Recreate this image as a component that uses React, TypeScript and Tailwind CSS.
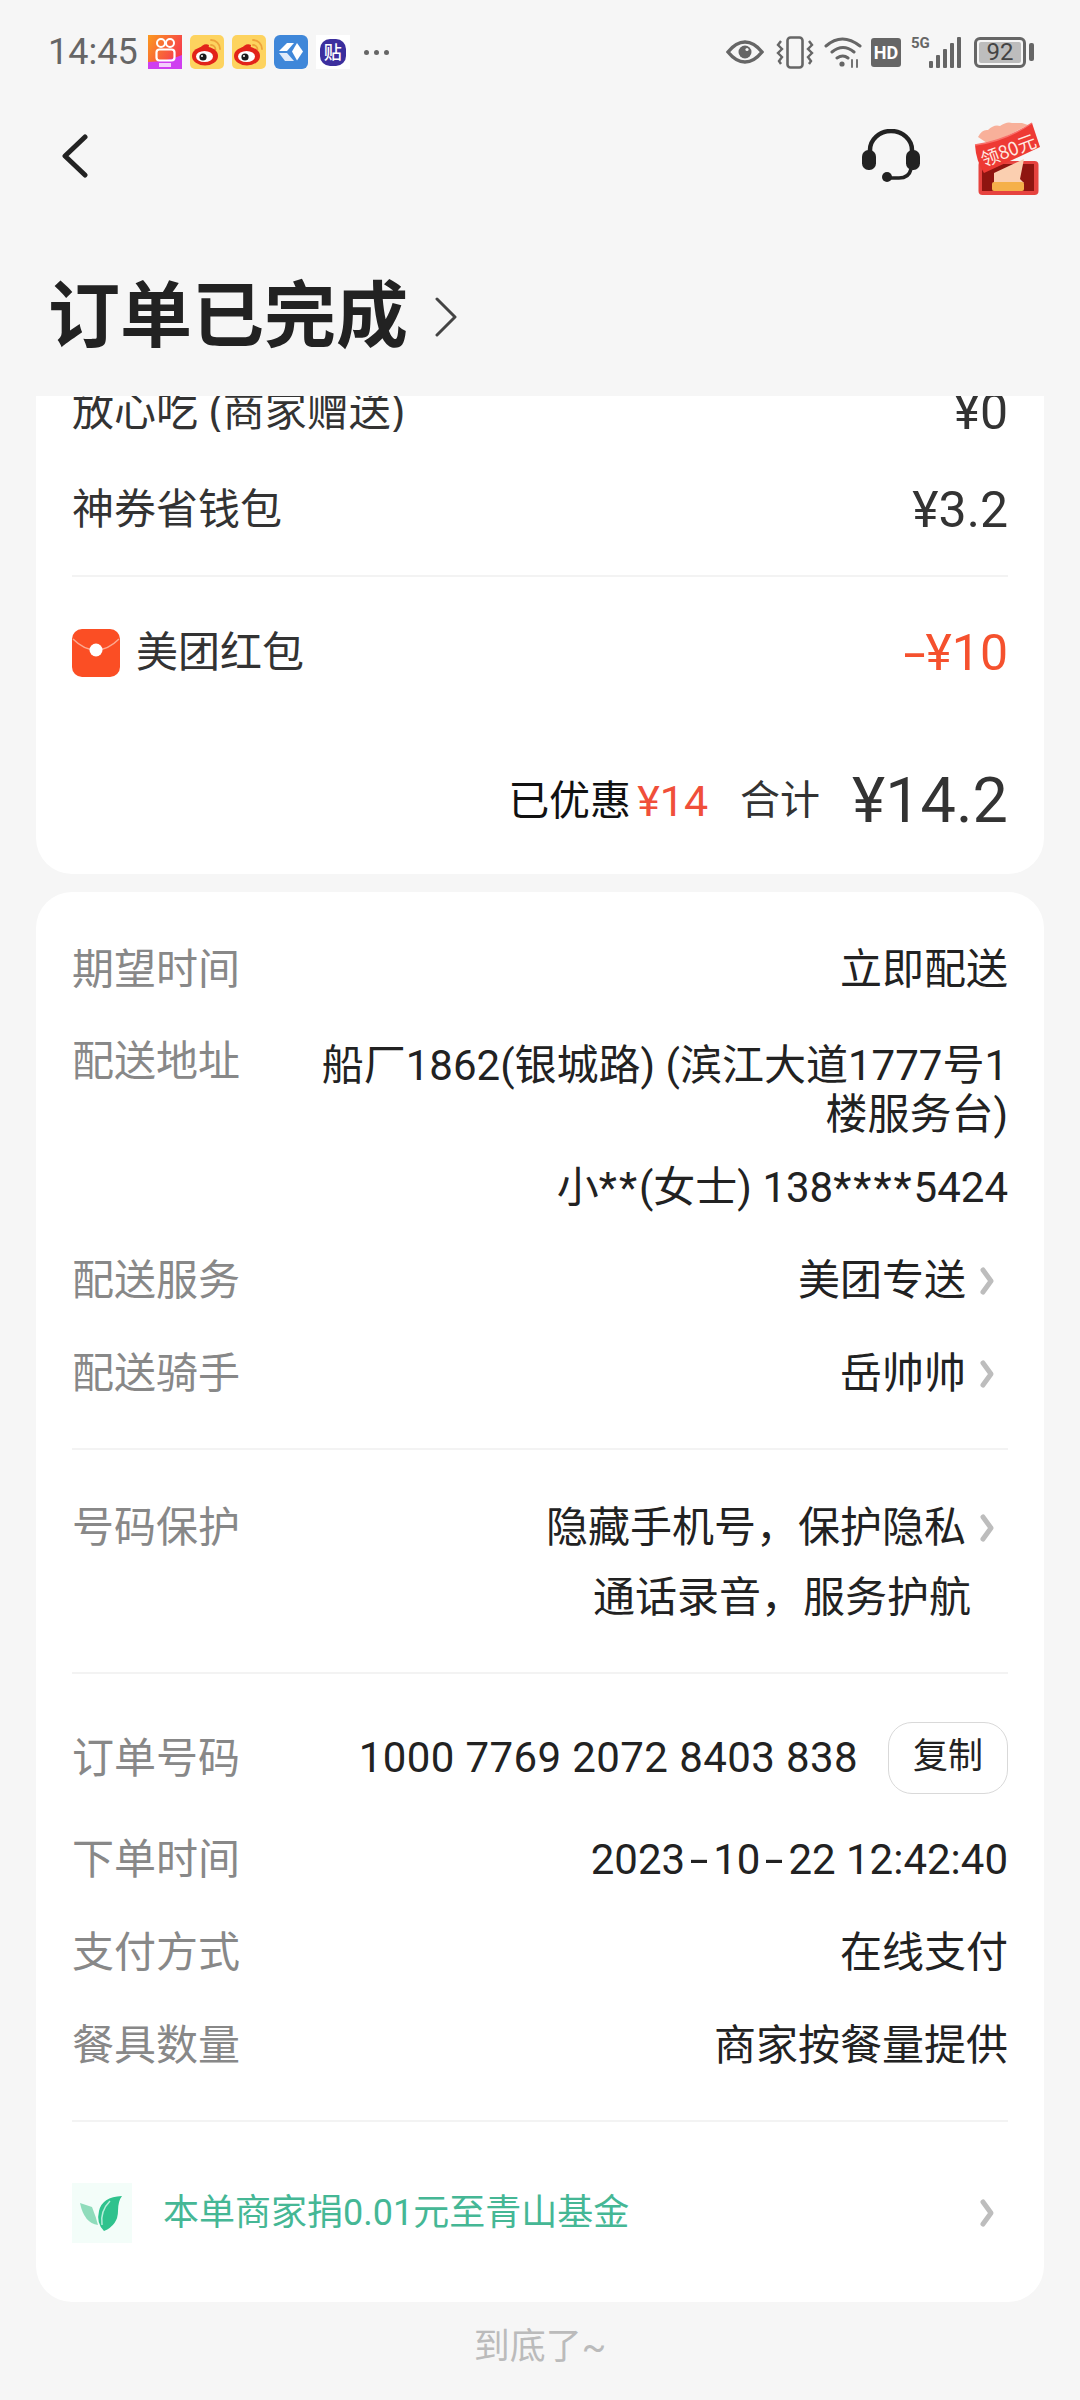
import React from 'react';

const Chevron = ({ className = '' }: { className?: string }) => (
  <svg viewBox="0 0 18 30" className={className} fill="none" stroke="currentColor" strokeWidth={5} strokeLinecap="round" strokeLinejoin="round">
    <path d="M5 4l8 11-8 11" />
  </svg>
);

// the hyphen in this UI font is much wider than Roboto's
const Dash = ({ width = 'w-[28px]' }: { width?: string }) => (
  <span className={`inline-block text-center scale-x-[1.6] ${width}`}>-</span>
);

const Kuaishou = () => (
  <svg viewBox="0 0 34 34" className="w-[34px] h-[34px]">
    <defs>
      <linearGradient id="ks" x1="0" y1="0" x2="1" y2="0.6">
        <stop offset="0" stopColor="#fb9a1f" />
        <stop offset="1" stopColor="#f6364f" />
      </linearGradient>
    </defs>
    <rect width="34" height="34" fill="url(#ks)" />
    <path d="M0 27q18 0 34-7v14H0z" fill="#cf3ff0" />
    <circle cx="13" cy="8" r="4" fill="none" stroke="#fff" strokeWidth="2" />
    <circle cx="22" cy="8" r="4" fill="none" stroke="#fff" strokeWidth="2" />
    <rect x="8.500" y="14.500" width="18" height="11" rx="3" fill="none" stroke="#fff" strokeWidth="2.200" />
    <rect x="11" y="28" width="12" height="4" fill="#fff" opacity="0.75" />
  </svg>
);

const Weibo = () => (
  <svg viewBox="0 0 34 34" className="w-[34px] h-[34px]">
    <rect width="34" height="34" rx="5" fill="#fdd35f" />
    <path d="M21 5a9 9 0 0 1 9 9M21 10a4.500 4.500 0 0 1 4.500 4.500" fill="none" stroke="#eda33a" strokeWidth="1.800" strokeLinecap="round" />
    <ellipse cx="15" cy="21" rx="13" ry="9.500" fill="#e2231a" />
    <path d="M8 15q6-8 11-5l-1 6z" fill="#e2231a" />
    <ellipse cx="14.500" cy="21.500" rx="8.500" ry="5.500" fill="#fff" />
    <circle cx="13" cy="22" r="3.600" fill="#1a1a1a" />
    <circle cx="12" cy="21" r="1" fill="#fff" />
  </svg>
);

const BlueApp = () => (
  <svg viewBox="0 0 34 34" className="w-[34px] h-[34px]">
    <rect width="34" height="34" rx="6" fill="#3f87d9" />
    <path d="M5 16l8-8h7l-7 8z" fill="#fff" />
    <path d="M5 18h8l7 8h-9z" fill="#dfeafa" />
    <path d="M23 8l6 8.500-6 9-5-9z" fill="#fff" />
  </svg>
);

const TieApp = () => (
  <div className="w-[34px] h-[34px] bg-white flex items-center justify-center">
    <div className="w-[26px] h-[27px] rounded-[10px] bg-[#3c2f9e] text-white text-[18px] leading-[27px] text-center font-medium">贴</div>
  </div>
);

const EyeIcon = () => (
  <svg viewBox="0 0 38 26" className="w-[38px] h-[26px]">
    <path d="M2 13Q10 3 19 3t17 10q-8 10-17 10T2 13z" fill="none" stroke="#666" strokeWidth="3.500" />
    <circle cx="19" cy="13" r="6.500" fill="#666" />
    <circle cx="21" cy="10.500" r="1.600" fill="#f6f6f6" />
  </svg>
);

const VibrateIcon = () => (
  <svg viewBox="0 0 38 33" className="w-[38px] h-[33px]" fill="none" stroke="#666" strokeWidth="2.400">
    <rect x="11.500" y="1.500" width="15" height="30" rx="3" strokeWidth="2.600" />
    <path d="M5 5L2 9l4 4-4 4 4 4-3 4 2 3M33 5l3 4-4 4 4 4-4 4 3 4-2 3" />
  </svg>
);

const WifiIcon = () => (
  <svg viewBox="0 0 38 32" className="w-[38px] h-[32px]" fill="none" stroke="#666" strokeWidth="3" strokeLinecap="round">
    <path d="M2 10q16-14 34 0M8 16q11-9 22 0M13 22q6-4 11 0" />
    <circle cx="18" cy="28" r="2.600" fill="#666" stroke="none" />
    <path d="M28 24v7M33 24v7" strokeWidth="1.800" />
  </svg>
);

const SignalIcon = () => (
  <svg viewBox="0 0 33 31" className="w-[33px] h-[31px]" fill="#666">
    <rect x="1" y="24" width="4" height="7" rx="1" />
    <rect x="8" y="18" width="4" height="13" rx="1" />
    <rect x="15" y="12" width="4" height="19" rx="1" />
    <rect x="22" y="6" width="4" height="25" rx="1" />
    <rect x="29" y="0" width="4" height="31" rx="1" />
  </svg>
);

const Headset = () => (
  <svg viewBox="0 0 60 54" className="w-[60px] h-[54px]">
    <path d="M9 24V21a21 19 0 0 1 42 0v3" fill="none" stroke="#222" strokeWidth="4.500" />
    <rect x="1" y="21" width="14" height="20" rx="6.500" fill="#222" />
    <rect x="45" y="21" width="14" height="20" rx="6.500" fill="#222" />
    <path d="M50 40q-2 9-12 9H26" fill="none" stroke="#222" strokeWidth="3.500" />
    <circle cx="26" cy="48" r="5" fill="#222" />
  </svg>
);

const PromoIcon = () => (
  <svg viewBox="12 5 70 80" className="w-[70px] h-[80px]">
    <rect x="18.500" y="50" width="60" height="34" rx="4" fill="#e6433f" />
    <rect x="22" y="53" width="52" height="27" fill="#8f1510" />
    <path d="M34 62l30-14-4 20 4 4H34z" fill="#fbcfb0" />
    <rect x="32" y="71" width="32" height="9" rx="2" fill="#f5b04a" />
    <path d="M18 26q4-8 10-7 6-6 12-4 7-5 12-3h10l6 2-38 20z" fill="#f8b09a" />
    <path d="M15 34q30-4 57-22l8 24-56 26q-8-12-9-28z" fill="#ee3a34" />
    <path d="M15 34q30-4 57-22" fill="none" stroke="#f9706a" strokeWidth="1.500" />
    <text x="24" y="56" transform="rotate(-21 24 56)" fontSize="18.500" fill="#ffe9e2" fontFamily="'Noto Sans CJK SC', sans-serif">领80元</text>
  </svg>
);

const RedPacket = () => (
  <svg viewBox="0 0 48 48" className="w-[48px] h-[48px] shrink-0">
    <rect width="48" height="48" rx="10" fill="#fb4e24" />
    <path d="M1 10q11 11 23 11t23-11" fill="none" stroke="#fda88f" strokeWidth="1.500" />
    <circle cx="24" cy="21" r="6.500" fill="#fff" />
  </svg>
);

const LeafIcon = () => (
  <div className="w-[60px] h-[60px] bg-[#f3fdf9] shrink-0">
    <svg viewBox="0 0 60 60" className="w-[60px] h-[60px]">
      <path d="M8 20q6 2 12 4 4 10 6 18Q12 40 8 20z" fill="#8fdcbb" />
      <path d="M50 13q-20 1-23 15-3 12 5 20 14-6 14-20 0-10 4-15z" fill="#2fc28d" />
      <path d="M38 18q-10 10-8 24" fill="none" stroke="#b7eeda" strokeWidth="1.500" />
    </svg>
  </div>
);

const Row = ({ label, children, className = '' }: { label: string; children: React.ReactNode; className?: string }) => (
  <div className={`flex justify-between items-start ${className}`}>
    <span className="text-[#888888] shrink-0">{label}</span>
    <div className="text-right">{children}</div>
  </div>
);

const Arrow = () => <Chevron className="w-[18px] h-[30px] text-[#bdbdbd] ml-[12px] mr-[12px] shrink-0" />;

export default function App() {
  return (
    <div className="w-[1080px] h-[2400px] bg-[#f6f6f6] overflow-hidden text-[42px] leading-[56px] text-[#222222]" style={{ fontFamily: 'Roboto, "Noto Sans CJK SC", sans-serif' }}>
      {/* status bar */}
      <div className="h-[104px] pl-[48px] pr-[46px] flex items-center justify-between">
        <div className="flex items-center">
          <span className="text-[36px] text-[#666666] leading-none mr-[10px]">14:45</span>
          <div className="flex items-center gap-[8px]">
            <Kuaishou />
            <Weibo />
            <Weibo />
            <BlueApp />
            <TieApp />
          </div>
          <div className="flex gap-[5px] ml-[14px]">
            <span className="w-[5px] h-[5px] rounded-full bg-[#666666]" />
            <span className="w-[5px] h-[5px] rounded-full bg-[#666666]" />
            <span className="w-[5px] h-[5px] rounded-full bg-[#666666]" />
          </div>
        </div>
        <div className="flex items-center">
          <EyeIcon />
          <div className="ml-[12px]"><VibrateIcon /></div>
          <div className="ml-[10px]"><WifiIcon /></div>
          <div className="ml-[9px] w-[30px] h-[29px] rounded-[3px] bg-[#666666] text-white text-[18px] font-bold leading-[29px] text-center">HD</div>
          <div className="ml-[10px] flex items-start relative">
            <span className="text-[#666666] text-[15px] font-bold leading-[15px] absolute -top-[1px] left-0">5G</span>
            <div className="ml-[17px]"><SignalIcon /></div>
          </div>
          <div className="ml-[13px] w-[52px] h-[31px] rounded-[6px] border-[3px] border-[#666666] p-[2px]">
            <div className="h-full w-full bg-[#bdbdbd] rounded-[2px] text-[#444444] text-[24px] leading-[21px] text-center">92</div>
          </div>
          <div className="ml-[3px] w-[5px] h-[18px] rounded-[2px] bg-[#666666]" />
        </div>
      </div>

      {/* nav */}
      <div className="h-[104px] pl-[62px] pr-[38px] flex items-center justify-between">
        <svg viewBox="0 0 26 44" className="w-[26px] h-[44px]" fill="none" stroke="#222" strokeWidth={5} strokeLinecap="round" strokeLinejoin="round">
          <path d="M23 3L3 22l20 19" />
        </svg>
        <div className="flex items-center gap-[51px]">
          <Headset />
          <PromoIcon />
        </div>
      </div>

      {/* title */}
      <div className="h-[188px] pl-[48px] pt-[39px] flex items-start">
        <div className="flex items-center h-[140px]">
          <h1 className="text-[72px] font-bold leading-none">订单已完成</h1>
          <svg viewBox="0 0 22 40" className="w-[22px] h-[40px] ml-[27px]" fill="none" stroke="#444" strokeWidth={3} strokeLinecap="round" strokeLinejoin="round">
            <path d="M2 2l18 18L2 38" />
          </svg>
        </div>
      </div>

      {/* price card, scrolled under the title */}
      <div className="mx-[36px] bg-white rounded-b-[36px] px-[36px] h-[478px]">
        <div className="h-[36px] overflow-hidden flex justify-between items-end">
          <span className="text-[#333333] leading-[56px] -mb-[8px]">放心吃 (商家赠送)</span>
          <span className="text-[#333333] text-[50px] leading-[56px] -mb-[8px]">¥0</span>
        </div>
        <div className="flex justify-between mt-[50px] text-[#333333]">
          <span>神券省钱包</span>
          <span className="text-[50px]">¥3.2</span>
        </div>
        <div className="h-[2px] bg-[#f3f3f3] mt-[37px]" />
        <div className="flex justify-between items-center mt-[48px]">
          <div className="flex items-center gap-[16px] text-[#333333]">
            <RedPacket />
            <span>美团红包</span>
          </div>
          <span className="text-[#f5512e] text-[50px]"><Dash width="w-[23px]" />¥10</span>
        </div>
        <div className="flex justify-end items-center mt-[90px] h-[60px]">
          <span className="text-[41px] text-[#111111]">已优惠</span>
          <span className="text-[#f04f3a] text-[43px] ml-[6px]">¥14</span>
          <span className="text-[40px] text-[#333333] ml-[32px]">合计</span>
          <span className="text-[63px] text-[#333333] ml-[32px]">¥14.2</span>
        </div>
      </div>

      {/* order info card */}
      <div className="mx-[36px] mt-[18px] bg-white rounded-[36px] px-[36px] pt-[50px] h-[1410px]">
        <Row label="期望时间">立即配送</Row>
        <Row label="配送地址" className="mt-[36px]">
          <div className="w-[700px] leading-[49px] pt-[7px]">船厂1862(银城路) (滨江大道1777号1楼服务台)</div>
          <div className="mt-[21px]">小<span className="tracking-[2px]">**</span>(女士) 138<span className="tracking-[2px]">****</span>5424</div>
        </Row>
        <Row label="配送服务" className="mt-[37px]">
          <div className="flex items-center justify-end">美团专送<Arrow /></div>
        </Row>
        <Row label="配送骑手" className="mt-[37px]">
          <div className="flex items-center justify-end">岳帅帅<Arrow /></div>
        </Row>
        <div className="h-[2px] bg-[#f3f3f3] mt-[46px]" />
        <Row label="号码保护" className="mt-[50px]">
          <div className="flex items-center justify-end">隐藏手机号，保护隐私<Arrow /></div>
          <div className="mt-[14px] pr-[37px]">通话录音，服务护航</div>
        </Row>
        <div className="h-[2px] bg-[#f3f3f3] mt-[46px]" />
        <Row label="订单号码" className="mt-[57px]">
          <div className="flex items-center justify-end -mt-[9px]">
            <span className="tracking-[0.4px]">1000 7769 2072 8403 838</span>
            <span className="ml-[30px] w-[120px] h-[72px] border-[1.5px] border-[#d9d9d9] rounded-[24px] text-[35px] leading-[68px] text-center">复制</span>
          </div>
        </Row>
        <Row label="下单时间" className="mt-[38px]">2023<Dash />10<Dash />22 12:42:40</Row>
        <Row label="支付方式" className="mt-[37px]">在线支付</Row>
        <Row label="餐具数量" className="mt-[37px]">商家按餐量提供</Row>
        <div className="h-[2px] bg-[#f3f3f3] mt-[46px]" />
        <div className="flex items-center mt-[61px]">
          <LeafIcon />
          <span className="text-[36px] text-[#45b795] ml-[31px] flex-1">本单商家捐0.01元至青山基金</span>
          <Chevron className="w-[18px] h-[30px] text-[#bdbdbd] mr-[12px]" />
        </div>
      </div>

      <div className="text-center text-[36px] text-[#bbbbbb] mt-[17px] leading-[56px]">到底了~</div>
    </div>
  );
}
